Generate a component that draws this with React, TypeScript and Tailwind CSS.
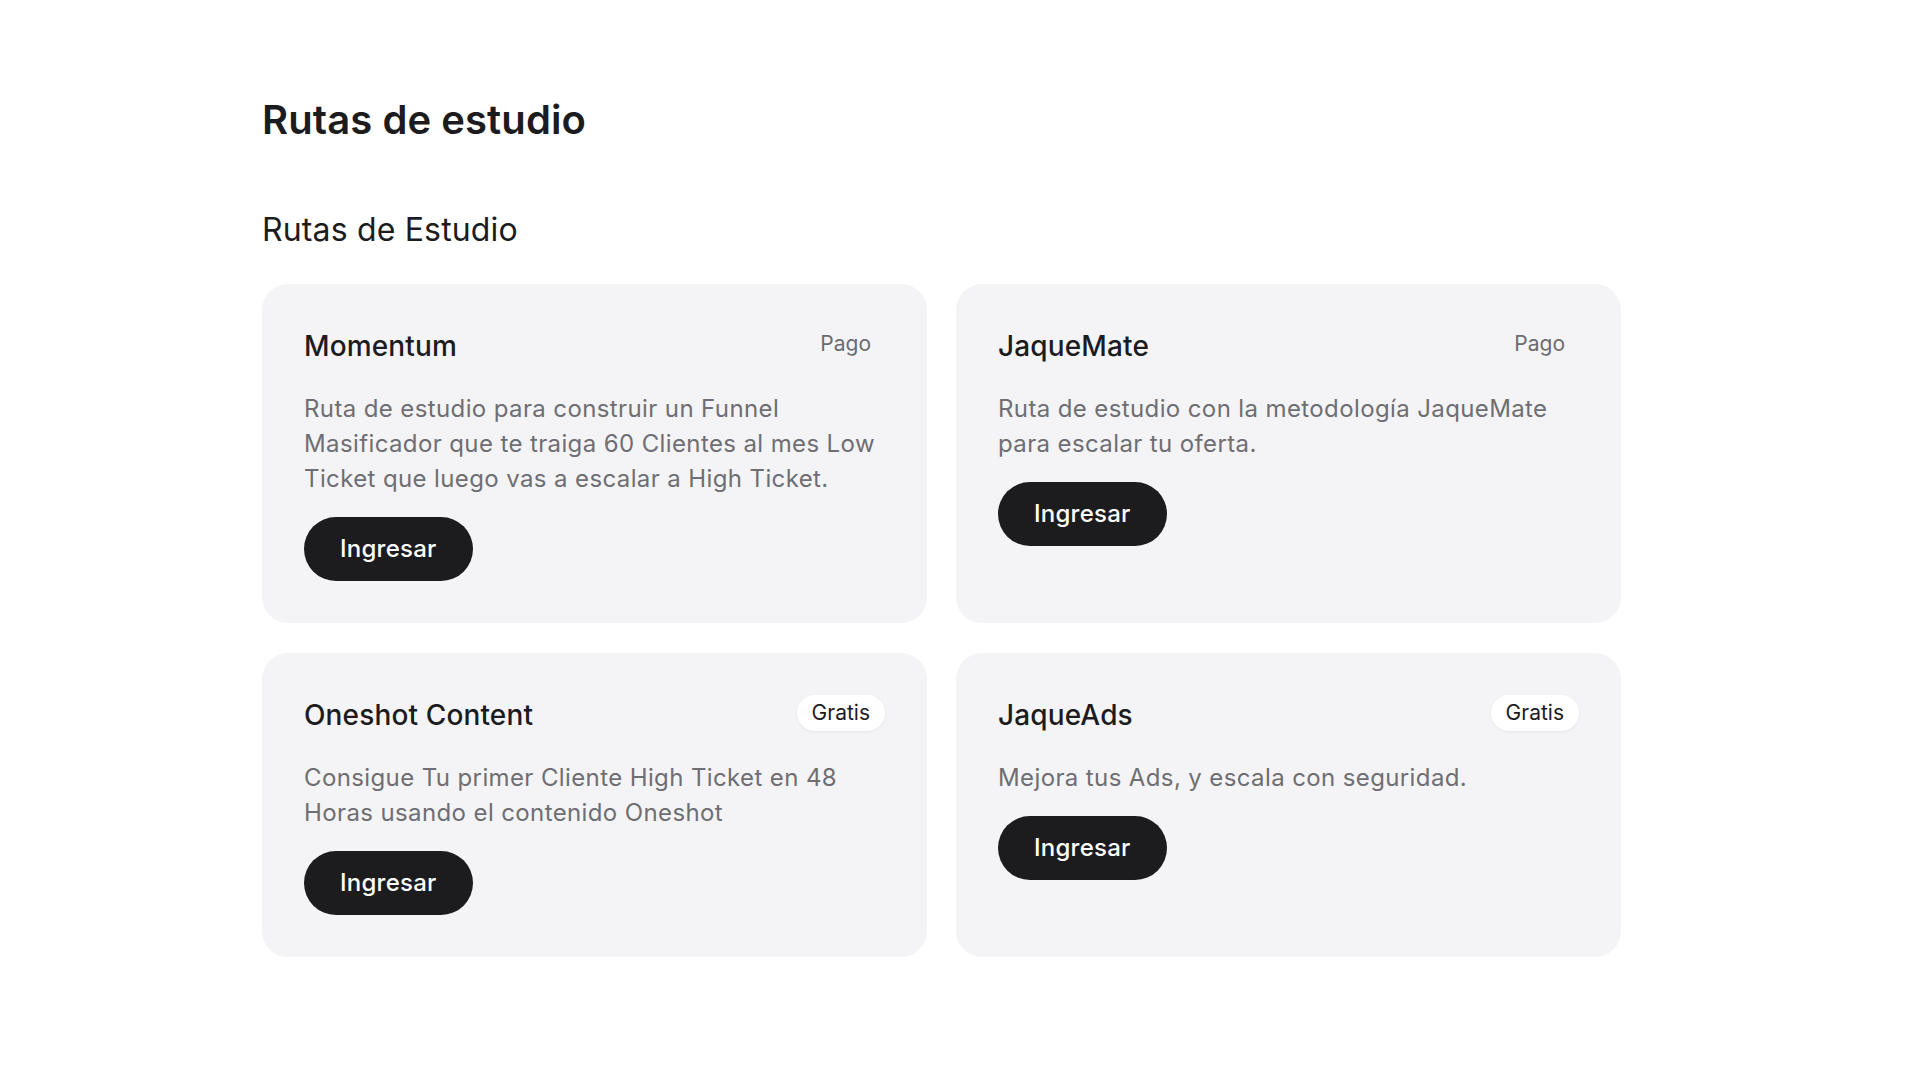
import React from "react";

type Route = {
  title: string;
  desc: string;
  badge: "Pago" | "Gratis";
};

const routes: Route[] = [
  {
    title: "Momentum",
    desc: "Ruta de estudio para construir un Funnel Masificador que te traiga 60 Clientes al mes Low Ticket que luego vas a escalar a High Ticket.",
    badge: "Pago",
  },
  {
    title: "JaqueMate",
    desc: "Ruta de estudio con la metodología JaqueMate para escalar tu oferta.",
    badge: "Pago",
  },
  {
    title: "Oneshot Content",
    desc: "Consigue Tu primer Cliente High Ticket en 48 Horas usando el contenido Oneshot",
    badge: "Gratis",
  },
  {
    title: "JaqueAds",
    desc: "Mejora tus Ads, y escala con seguridad.",
    badge: "Gratis",
  },
];

function Card({ r }: { r: Route }) {
  return (
    <div className="flex flex-col items-start rounded-[26px] bg-[#f4f4f6] p-[42px]">
      <div className="flex w-full items-start justify-between">
        <h3 className="text-[28px] leading-[40px] font-medium tracking-[0.005em] text-[#1c1c1e]">{r.title}</h3>
        {r.badge === "Pago" ? (
          <span className="rounded-full px-[14px] h-[36px] flex items-center text-[21px] text-[#6b6b70]">
            Pago
          </span>
        ) : (
          <span className="rounded-full bg-white px-[15px] h-[36px] flex items-center text-[21px] text-[#1c1c1e] shadow-[0_1px_3px_rgba(0,0,0,0.06)]">
            Gratis
          </span>
        )}
      </div>
      <p className="mt-[25px] text-[24px] leading-[35px] tracking-[0.016em] text-[#6e6e73]">{r.desc}</p>
      <button className="mt-[21px] h-[64px] rounded-full bg-[#1c1c1e] px-[36px] text-[24px] font-medium tracking-[0.01em] text-white">
        Ingresar
      </button>
    </div>
  );
}

export default function App() {
  return (
    <div
      className="min-h-screen bg-white pl-[262px] pt-[98px] pb-[100px]"
      style={{ fontFamily: "Inter, 'Noto Sans', sans-serif" }}
    >
      <div className="w-[1359px]">
        <h1 className="text-[40px] leading-[44px] font-semibold tracking-[0.002em] text-[#1c1c1e]">
          Rutas de estudio
        </h1>
        <h2 className="mt-[70px] text-[32px] leading-[36px] font-normal tracking-[0.005em] text-[#1c1c1e]">Rutas de Estudio</h2>
        <div className="mt-[36px] grid grid-cols-2 gap-x-[29px] gap-y-[30px]">
          {routes.map((r) => (
            <Card key={r.title} r={r} />
          ))}
        </div>
      </div>
    </div>
  );
}
